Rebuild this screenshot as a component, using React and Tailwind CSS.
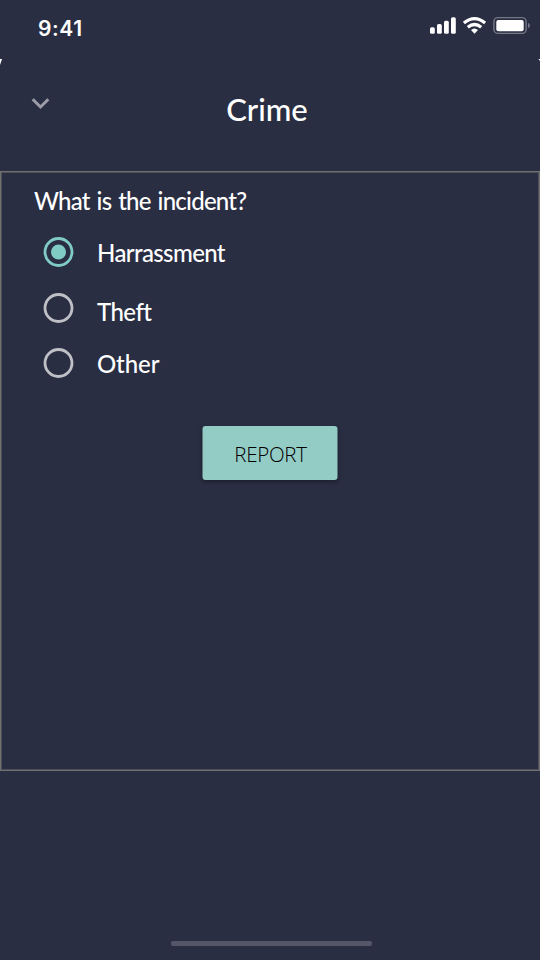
import React from "react";

const gill = "font-['Gill_Sans','Lato',sans-serif] font-medium text-white whitespace-nowrap";

function StatusBar() {
  return (
    <div className="flex h-[59px] shrink-0 items-start justify-between pl-[38px] pr-[10px]">
      <span className="mt-[14px] font-['Inter',sans-serif] text-[21px] font-[560] leading-[30px] tracking-[0.6px] text-white">
        9:41
      </span>
      <svg className="mt-[14px]" width="102" height="24" viewBox="428 14 102 24" fill="none">
        <g fill="white">
          <rect x="430" y="27.3" width="4.8" height="6.5" rx="1.6" />
          <rect x="437" y="24" width="4.8" height="9.8" rx="1.6" />
          <rect x="444" y="20.7" width="4.8" height="13.1" rx="1.6" />
          <rect x="451" y="17.3" width="4.8" height="16.5" rx="1.6" />
        </g>
        <g stroke="white" strokeWidth="3.3">
          <path d="M463.9 23Q474.5 14.2 485.1 23" />
          <path d="M467.8 27.2Q474.5 21.7 481.2 27.2" />
        </g>
        <path d="M471 30Q474.5 27 478 30L474.5 33.7Z" fill="white" />
        <rect x="493.9" y="17.6" width="32.2" height="15.8" rx="4" stroke="#747784" strokeWidth="1.4" />
        <rect x="496.3" y="19.9" width="27.4" height="11.3" rx="2" fill="white" />
        <path d="M528 22.8Q530 24 530 25.5Q530 27 528 28.2Z" fill="#747784" />
      </svg>
    </div>
  );
}

function Radio({ checked }) {
  return (
    <svg className="shrink-0" width="31" height="30" viewBox="0 0 31 30" fill="none">
      <circle cx="15.5" cy="15" r="13.5" stroke={checked ? "#80cbc4" : "#bfc0c6"} strokeWidth="2.8" />
      {checked && <circle cx="15.5" cy="15" r="7.5" fill="#80cbc4" />}
    </svg>
  );
}

function Option({ label, checked, labelClass }) {
  return (
    <label className="flex h-[30px] items-center gap-[23px]">
      <Radio checked={checked} />
      <span className={`${gill} text-[24px] leading-[30px] ${labelClass}`}>{label}</span>
    </label>
  );
}

export default function App() {
  return (
    <div className="flex h-[960px] w-[540px] flex-col overflow-hidden bg-[#2a2e43]">
      <StatusBar />
      <header className="relative flex h-[112px] shrink-0 justify-center">
        <svg className="absolute left-0 top-0" width="540" height="8" viewBox="0 0 540 8">
          <path d="M0 0H2L0 6Z" fill="white" />
          <path d="M538.5 0H540V2Z" fill="white" />
        </svg>
        <svg className="absolute left-[31px] top-[38px]" width="19" height="14" viewBox="0 0 19 14" fill="none">
          <path d="M1.7 2.3L9.5 10L17.3 2.3" stroke="#9c9da7" strokeWidth="3" />
        </svg>
        <h1 className={`${gill} mt-[30px] h-[40px] pr-[6px] text-[31px] leading-[40px]`}>Crime</h1>
      </header>
      <main className="flex h-[600px] shrink-0 flex-col border border-[#707070] shadow-[inset_0_0_0_1px_#4d4f59]">
        <h2 className={`${gill} ml-[33px] mt-[14px] h-[30px] text-[24px] leading-[30px] tracking-[-0.75px] [word-spacing:1.5px]`}>
          What is the incident?
        </h2>
        <div className="ml-[42px] mt-[21px] flex flex-col gap-[25.5px]">
          <Option label="Harrassment" checked labelClass="pt-px tracking-[-0.62px]" />
          <Option label="Theft" labelClass="pt-[9px] tracking-[-0.55px]" />
          <Option label="Other" labelClass="pt-[2px] tracking-[-0.1px]" />
        </div>
        <button className="mx-auto mt-[48px] h-[54px] w-[135px] -translate-x-[0.5px] rounded-[3px] bg-[#93cbc5] pl-[2px] pt-[2px] font-['Segoe_UI','Open_Sans',sans-serif] text-[20.5px] font-[350] leading-[30px] tracking-[-0.3px] text-black shadow-[0_2px_4px_rgba(0,0,0,0.35)]">
          REPORT
        </button>
      </main>
      <footer className="flex flex-1 items-end justify-center pb-[14px] pl-[3px]">
        <div className="h-[5px] w-[201px] rounded-[2px] bg-[#555769]" />
      </footer>
    </div>
  );
}
